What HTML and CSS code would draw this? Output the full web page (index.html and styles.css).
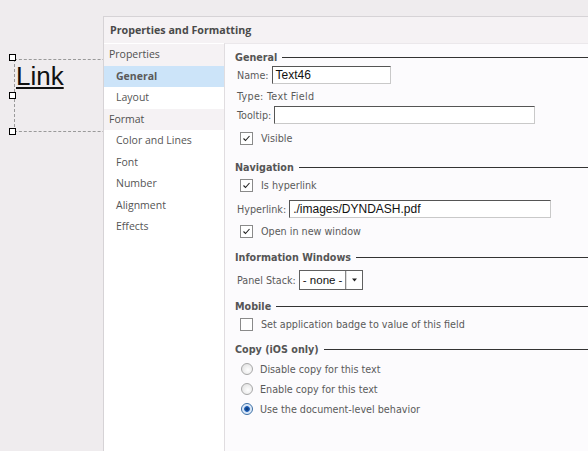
FILE: index.html
```html
<!DOCTYPE html>
<html>
<head>
<meta charset="utf-8">
<link rel="stylesheet" href="styles.css">
</head>
<body>
<div class="canvas">
  <div class="selbox"></div>
  <div class="handle h1"></div>
  <div class="handle h2"></div>
  <div class="handle h3"></div>
  <div class="linktext">Link</div>

  <div class="dialog">
    <div class="title">Properties and Formatting</div>
    <div class="dbody">
      <div class="nav">
        <div class="nav-head">Properties</div>
        <div class="nav-item selected">General</div>
        <div class="nav-item">Layout</div>
        <div class="nav-head">Format</div>
        <div class="nav-item">Color and Lines</div>
        <div class="nav-item">Font</div>
        <div class="nav-item">Number</div>
        <div class="nav-item">Alignment</div>
        <div class="nav-item">Effects</div>
      </div>
      <div class="content">
        <div class="legend lg-general"><span>General</span><i></i></div>
        <div class="row r-name"><span class="lbl">Name:</span><div class="input w-name">Text46</div></div>
        <div class="row r-type"><span class="lbl">Type: Text Field</span></div>
        <div class="row r-tooltip"><span class="lbl">Tooltip:</span><div class="input w-tooltip"></div></div>
        <div class="row chkrow r-visible"><span class="chk on"><svg viewBox="0 0 11 11" width="11" height="11"><path d="M2.5 5.5 L4.5 7.5 L8.5 3" fill="none" stroke="#222" stroke-width="1.1"/></svg></span><span>Visible</span></div>

        <div class="legend lg-nav"><span>Navigation</span><i></i></div>
        <div class="row chkrow r-ishyper"><span class="chk on"><svg viewBox="0 0 11 11" width="11" height="11"><path d="M2.5 5.5 L4.5 7.5 L8.5 3" fill="none" stroke="#222" stroke-width="1.1"/></svg></span><span>Is hyperlink</span></div>
        <div class="row r-hyper"><span class="lbl">Hyperlink:</span><div class="input w-hyper">./images/DYNDASH.pdf</div></div>
        <div class="row chkrow r-open"><span class="chk on"><svg viewBox="0 0 11 11" width="11" height="11"><path d="M2.5 5.5 L4.5 7.5 L8.5 3" fill="none" stroke="#222" stroke-width="1.1"/></svg></span><span>Open in new window</span></div>

        <div class="legend lg-info"><span>Information Windows</span><i></i></div>
        <div class="row r-panel"><span class="lbl">Panel Stack:</span><div class="select"><span class="sel-text">- none -</span><span class="sel-btn"><svg viewBox="0 0 7 4" width="7" height="4"><path d="M1 0.5 H6 L3.5 3.5 Z" fill="#222"/></svg></span></div></div>

        <div class="legend lg-mobile"><span>Mobile</span><i></i></div>
        <div class="row chkrow r-badge"><span class="chk"></span><span>Set application badge to value of this field</span></div>

        <div class="legend lg-copy"><span>Copy (iOS only)</span><i></i></div>
        <div class="row radrow r-rad1"><span class="radio"></span><span>Disable copy for this text</span></div>
        <div class="row radrow r-rad2"><span class="radio"></span><span>Enable copy for this text</span></div>
        <div class="row radrow r-rad3"><span class="radio on"></span><span>Use the document-level behavior</span></div>
      </div>
    </div>
  </div>
</div>
</body>
</html>
```

FILE: styles.css
```css
html, body {
  margin: 0;
  padding: 0;
}
body {
  width: 588px;
  height: 451px;
  overflow: hidden;
  background: #efecee;
  font-family: "DejaVu Sans Condensed", "DejaVu Sans", sans-serif;
}
.canvas {
  position: relative;
  width: 588px;
  height: 451px;
}
.selbox {
  position: absolute;
  left: 14px;
  top: 59px;
  width: 120px;
  height: 71px;
  border-left: 1px dashed #9a9a9a;
  border-top: 1px dashed #9a9a9a;
  border-bottom: 1px dashed #9a9a9a;
}
.handle {
  position: absolute;
  left: 9px;
  width: 5px;
  height: 5px;
  border: 1px solid #000;
  background: #fff;
}
.h1 { top: 54px; }
.h2 { top: 92px; }
.h3 { top: 128px; }
.linktext {
  position: absolute;
  left: 16px;
  top: 60px;
  font-family: "Liberation Sans", Arial, sans-serif;
  font-size: 26px;
  line-height: 32px;
  color: #111;
  text-decoration: underline;
  text-decoration-thickness: 2px;
  text-underline-offset: 2px;
}
.dialog {
  position: absolute;
  left: 103px;
  top: 16px;
  right: 0;
  bottom: 0;
  background: #f5f2f4;
  border-left: 1px solid #d6d3d6;
  border-top: 1px solid #d6d3d6;
  display: flex;
  flex-direction: column;
}
.title {
  height: 26px;
  line-height: 26px;
  padding-left: 6px;
  font-family: "Open Sans", sans-serif;
  font-weight: bold;
  font-size: 10.7px;
  color: #4a4a4a;
}
.dbody {
  flex: 1;
  display: flex;
}
.nav {
  width: 120px;
  padding-top: 1px;
  background: #ffffff;
  font-family: "Open Sans", sans-serif;
  font-size: 10.5px;
  color: #555;
}
.nav-head {
  height: 21.5px;
  line-height: 21.5px;
  padding-left: 5px;
  background: #f5f2f4;
  color: #505050;
}
.nav-item {
  height: 21.5px;
  line-height: 21.5px;
  padding-left: 12px;
}
.nav-item.selected {
  background: #cce4f9;
  font-weight: bold;
  color: #5a5a5a;
}
.content {
  flex: 1;
  background: #fcfbfd;
  border-left: 1px solid #e0dde0;
  border-top: 1px solid #ebe8eb;
  padding: 6px 0 0 10px;
  display: flex;
  flex-direction: column;
  font-size: 10.7px;
  color: #5a5a5a;
  overflow: hidden;
}
.legend {
  height: 14px;
  display: flex;
  align-items: center;
  gap: 5px;
  font-weight: bold;
  color: #555;
}
.legend span {
  white-space: nowrap;
}
.legend i {
  flex: 1;
  height: 1px;
  background: #333;
}
.row {
  height: 18px;
  display: flex;
  align-items: center;
  white-space: nowrap;
}
.lbl {
  padding-left: 2px;
  margin-right: 3px;
}
.r-type .lbl {
  letter-spacing: 0.3px;
}
.input {
  height: 16px;
  line-height: 16px;
  background: #fff;
  border: 1px solid;
  border-color: #555 #c9c9c9 #c9c9c9 #555;
  padding-left: 3px;
  box-sizing: content-box;
  font-family: "Liberation Sans", Arial, sans-serif;
  font-size: 12px;
  color: #111;
}
.w-name { width: 114px; }
.w-tooltip { width: 256px; }
.w-hyper { width: 257px; }
.chkrow { padding-left: 5px; }
.chk {
  width: 11px;
  height: 11px;
  border: 1px solid #8a8a8a;
  background: #fff;
  margin-right: 8px;
  display: flex;
}
.radrow { padding-left: 6px; }
.radio {
  width: 10px;
  height: 10px;
  border-radius: 50%;
  border: 1px solid #a8a8a8;
  background: radial-gradient(circle at 60% 60%, #ffffff 0%, #e6e6e6 70%, #d8d8d8 100%);
  margin-right: 7px;
}
.radio.on {
  border-color: #3a6ea5;
  background: radial-gradient(circle at 50% 50%, #0b2f66 0%, #1c5eb8 35%, #cfe0f5 45%, #ffffff 100%);
}
.select {
  height: 18px;
  display: flex;
  border: 1px solid #606060;
  background: #fff;
  font-family: "Liberation Sans", Arial, sans-serif;
  font-size: 11.5px;
  color: #111;
}
.sel-text {
  width: 41px;
  padding: 0 1px 0 3px;
  line-height: 18px;
  border-right: 1px solid #888;
  white-space: nowrap;
  overflow: hidden;
}
.sel-btn {
  width: 15px;
  display: flex;
  align-items: center;
  justify-content: center;
  background: #fff;
  border-left: 1px solid #ddd;
}
.lg-general { margin-top: 0; }
.r-name { margin-top: 2px; }
.r-type { margin-top: 3px; }
.r-tooltip { margin-top: 1px; }
.r-visible { margin-top: 5px; }
.lg-nav { margin-top: 13px; }
.r-ishyper { margin-top: 2px; }
.r-hyper { margin-top: 6px; }
.r-open { margin-top: 4px; }
.lg-info { margin-top: 10px; }
.r-panel { margin-top: 6px; height: 20px; }
.lg-mobile { margin-top: 9px; }
.r-badge { margin-top: 2px; }
.lg-copy { margin-top: 9px; }
.r-rad1 { margin-top: 4px; }
.r-rad2 { margin-top: 2px; }
.r-rad3 { margin-top: 2px; }
```
